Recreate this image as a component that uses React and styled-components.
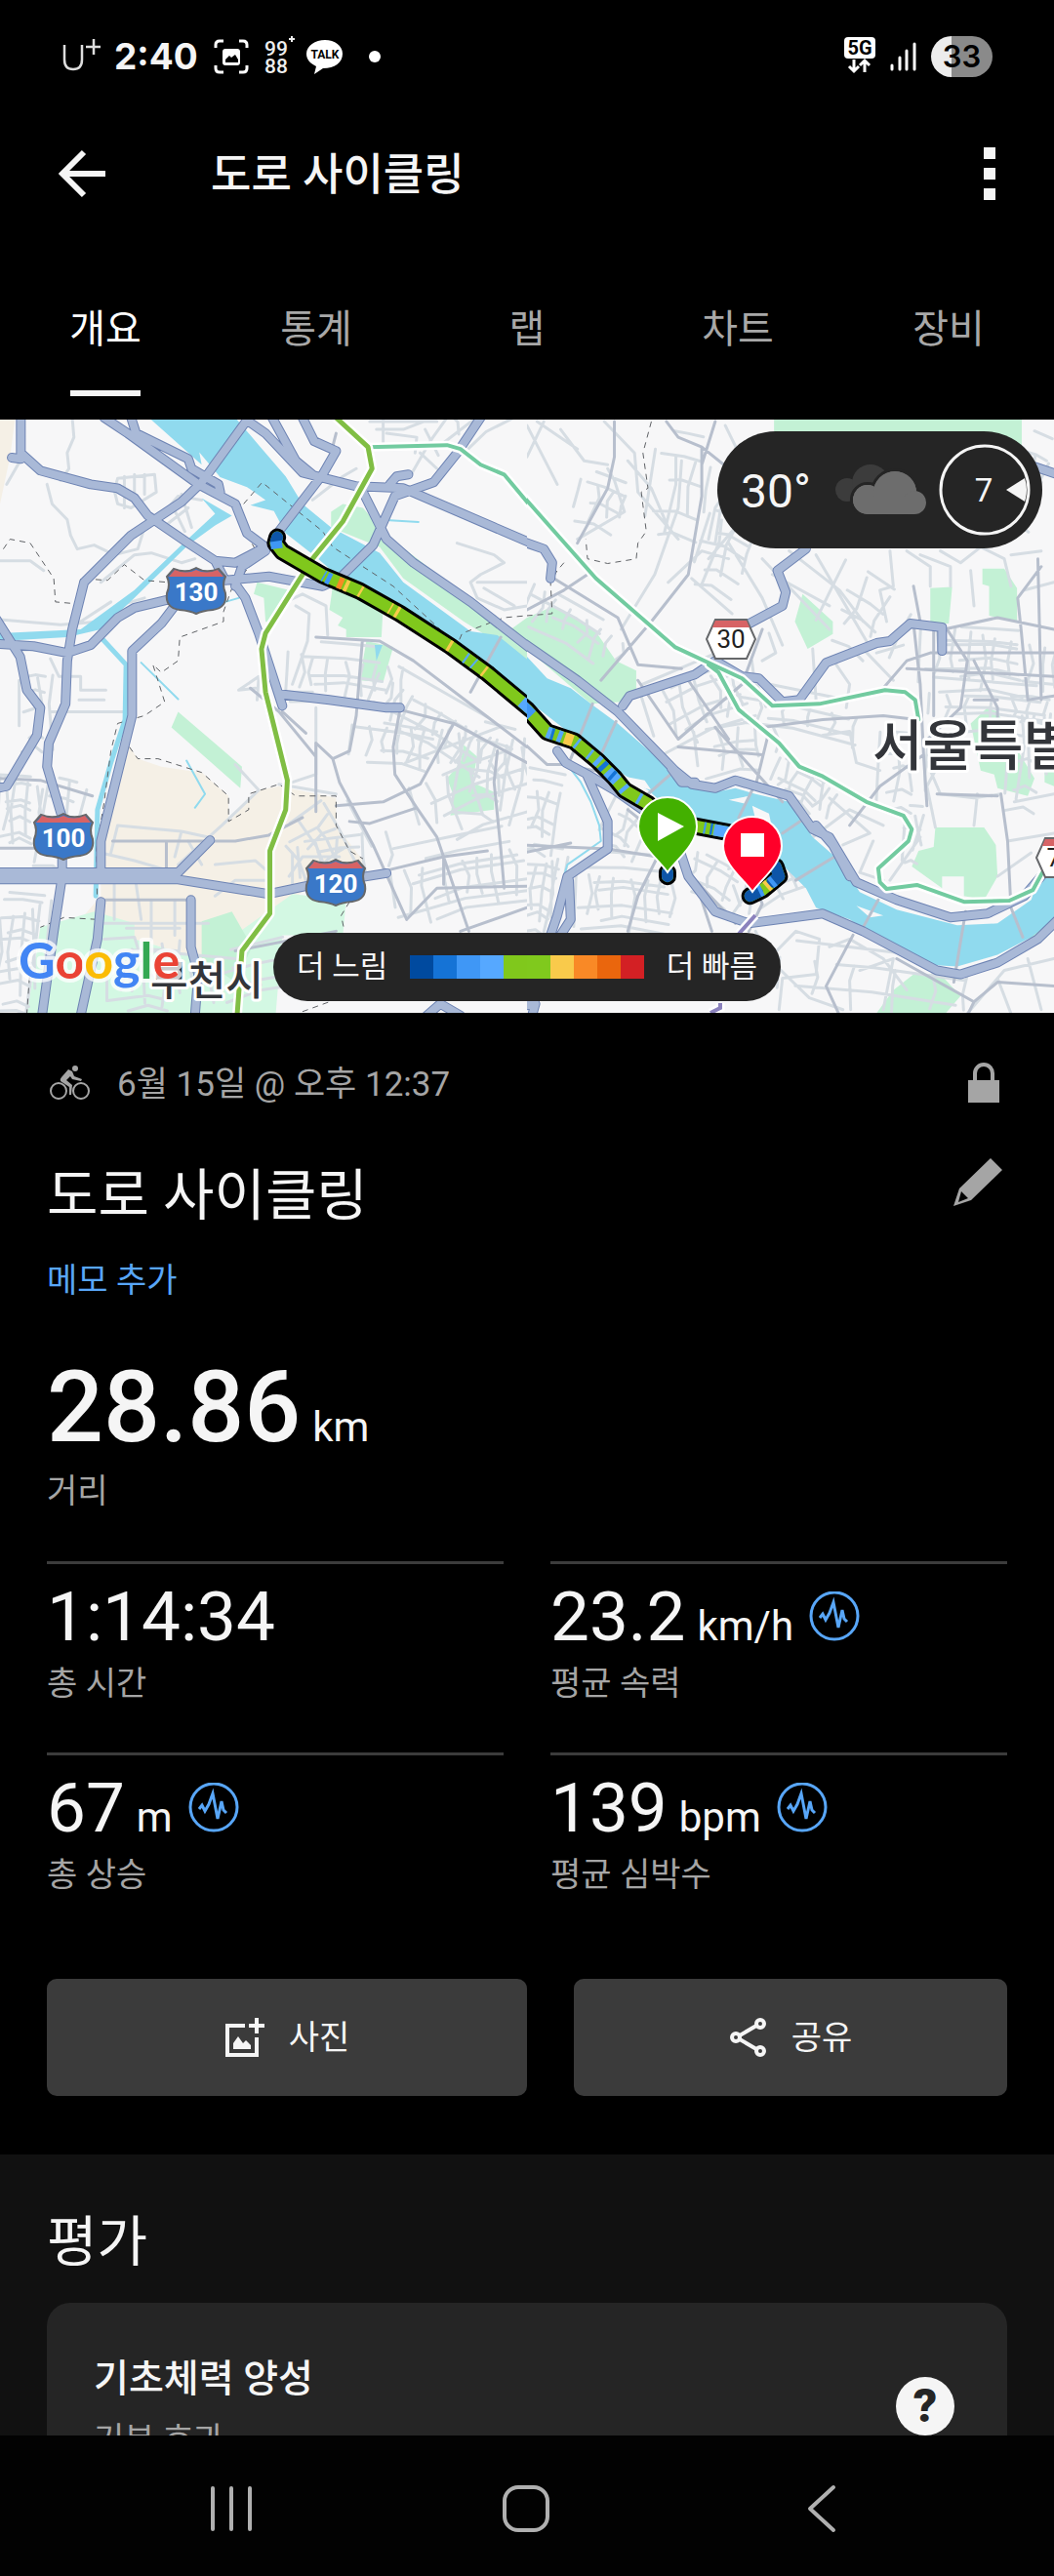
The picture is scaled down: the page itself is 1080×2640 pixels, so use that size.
import React, { useState } from 'react'
import styled, { createGlobalStyle } from 'styled-components'

const GlobalStyle = createGlobalStyle`
  * {
    box-sizing: border-box;
  }

  body {
    margin: 0;
    background: #000;
    color: #f5f5f5;
    font-family: Roboto, 'Noto Sans CJK KR', sans-serif;
  }

  button {
    padding: 0;
    border: none;
    background: none;
    color: inherit;
    font: inherit;
    cursor: pointer;
  }

  h1,
  h2,
  h3,
  p {
    margin: 0;
    font-weight: 400;
  }

  svg {
    display: block;
    flex: none;
  }
`

const Screen = styled.div`
  display: flex;
  flex-direction: column;
  height: 100vh;
`

const StatusBar = styled.div`
  display: flex;
  flex: none;
  align-items: center;
  justify-content: space-between;
  height: 116px;
  padding: 0 63px;
`

const StatusGroup = styled.div`
  display: flex;
  align-items: center;
  gap: 12px;
`

const Clock = styled.span`
  font-family: Inter, sans-serif;
  font-size: 37px;
  font-weight: 700;
  line-height: 48px;
`

const Battery = styled.span`
  width: 63px;
  height: 42px;
  border-radius: 21px;
  background: linear-gradient(90deg, #ececec 33%, #8a8a8a 33%);
  color: #000;
  font-family: Inter, sans-serif;
  font-size: 31px;
  font-weight: 600;
  line-height: 42px;
  text-align: center;
`

const AppBar = styled.header`
  display: flex;
  flex: none;
  align-items: center;
  height: 124px;
  padding: 0 60px;
`

const AppTitle = styled.h1`
  flex: 1;
  padding: 4px 0 0 108px;
  font-size: 45px;
  font-weight: 500;
  line-height: 60px;
`

const TabList = styled.div`
  display: flex;
  flex: none;
`

const Tab = styled.button`
  display: flex;
  flex: 1;
  flex-direction: column;
  align-items: center;
  gap: 32px;
  padding: 68px 0 24px;
  color: ${(props) => (props.$active ? '#fff' : '#a8a8a8')};
  font-size: 40px;
  line-height: 60px;

  &::after {
    content: '';
    width: 72px;
    height: 6px;
    background: ${(props) => (props.$active ? '#f5f5f5' : 'transparent')};
  }
`

const Content = styled.main`
  flex: 1;
  min-height: 0;
  overflow: hidden;
`

const MapArea = styled.section`
  position: relative;
`

const MapSvg = styled.svg`
  width: 100%;
  height: auto;
`

const Weather = styled.div`
  position: absolute;
  top: 12px;
  right: 12px;
  display: flex;
  align-items: center;
  gap: 12px;
  width: 333px;
  height: 120px;
  padding: 0 12px 0 24px;
  border-radius: 60px;
  background: #252525;
`

const Temperature = styled.span`
  flex: 1;
  padding-top: 4px;
  font-size: 48px;
  line-height: 60px;
`

const Legend = styled.div`
  position: absolute;
  bottom: 12px;
  left: 50%;
  display: flex;
  align-items: center;
  justify-content: space-between;
  width: 520px;
  height: 70px;
  padding: 0 24px;
  transform: translateX(-50%);
  border-radius: 35px;
  background: #252525;
  font-size: 31px;
  line-height: 48px;
`

const Scale = styled.div`
  display: flex;
`

const Swatch = styled.span`
  width: 24px;
  height: 24px;
  background: ${(props) => props.$color};
`

const Summary = styled.section`
  padding: 48px 48px 60px;
`

const MetaRow = styled.div`
  display: flex;
  align-items: center;
  gap: 24px;
  height: 48px;
  color: #a5a5a5;
  font-size: 35px;
  line-height: 48px;
`

const MetaDate = styled.p`
  flex: 1;
  padding-top: 4px;
`

const NameRow = styled.div`
  display: flex;
  align-items: flex-start;
  justify-content: space-between;
  margin-top: 48px;
`

const ActivityName = styled.h2`
  font-size: 57px;
  line-height: 88px;
`

const MemoLink = styled.a`
  display: block;
  margin-top: 20px;
  color: #58a6f8;
  font-size: 34px;
  line-height: 44px;
  text-decoration: none;
`

const Distance = styled.div`
  margin-top: 48px;
`

const ValueRow = styled.div`
  display: flex;
  align-items: baseline;
  gap: 12px;
`

const Value = styled.span`
  font-size: ${(props) => (props.$large ? 102 : 71)}px;
  font-weight: ${(props) => (props.$large ? 500 : 400)};
  line-height: ${(props) => (props.$large ? 120 : 84)}px;
`

const Unit = styled.span`
  font-size: 42px;
`

const Label = styled.p`
  margin-top: 4px;
  color: #a5a5a5;
  font-size: 34px;
  line-height: 44px;
`

const StatGrid = styled.div`
  display: grid;
  grid-template-columns: 1fr 1fr;
  column-gap: 48px;
  margin-top: 50px;
`

const StatCell = styled.div`
  height: 196px;
  padding-top: 12px;
  border-top: 3px solid #3c3c3c;
`

const InfoButton = styled.button`
  align-self: center;
  margin-left: 4px;
`

const Actions = styled.div`
  display: flex;
  gap: 48px;
  margin-top: 36px;
`

const ActionButton = styled.button`
  display: flex;
  flex: ${(props) => props.$grow};
  align-items: center;
  justify-content: center;
  gap: 24px;
  height: 120px;
  border-radius: 10px;
  background: #3b3b3b;
  font-size: 34px;
  line-height: 48px;
`

const Ratings = styled.section`
  padding: 50px 48px 48px;
  background: #111;
`

const SectionTitle = styled.h2`
  font-size: 56px;
  line-height: 80px;
`

const Card = styled.article`
  display: flex;
  align-items: flex-start;
  justify-content: space-between;
  margin-top: 22px;
  padding: 52px 54px 96px 48px;
  border-radius: 24px;
  background: #252525;
`

const CardTitle = styled.h3`
  font-size: 39px;
  font-weight: 500;
  line-height: 52px;
`

const CardSubtitle = styled.p`
  margin-top: 14px;
  color: #a5a5a5;
  font-size: 34px;
  line-height: 44px;
`

const HelpButton = styled.button`
  width: 60px;
  height: 60px;
  margin-top: 24px;
  border-radius: 50%;
  background: #f5f5f5;
  color: #252525;
  font-size: 48px;
  font-weight: 900;
  line-height: 60px;
`

const NavBar = styled.nav`
  display: flex;
  flex: none;
  height: 144px;
  padding: 6px 88px 0 86px;
  background: #020202;
`

const NavButton = styled.button`
  display: flex;
  flex: 1;
  align-items: center;
  justify-content: center;
`

/* ---------- map data ---------- */

const colors = {
  land: '#f7f7f8',
  water: '#90daee',
  park: '#c3f1d5',
  meadow: '#d3f8e3',
  city: '#f5f0e6',
  street: '#d6dde3',
  avenue: '#b7bfcd',
  highway: '#a9b9d7',
  highwayEdge: '#6d83b3',
}

// one street block: slightly irregular lines across a tilted rectangle
function streets(x, y, w, h, cols, rows, angle) {
  const rad = (angle * Math.PI) / 180
  const at = (u, v) => {
    const px = x + u * Math.cos(rad) - v * Math.sin(rad)
    const py = y + u * Math.sin(rad) + v * Math.cos(rad)
    return `${Math.round(px)} ${Math.round(py)}`
  }
  let d = ''
  for (let i = 0; i <= cols; i++) {
    const u = (w * i) / cols + Math.sin(i * 5 + x) * 9
    const top = Math.abs(Math.sin(i * 3 + y)) * h * 0.3
    const bottom = h - Math.abs(Math.cos(i * 7 + x)) * h * 0.3
    d += `M${at(u, top)}L${at(u + Math.sin(i * 2) * 14, h / 2)}L${at(u, bottom)}`
  }
  for (let j = 0; j <= rows; j++) {
    const v = (h * j) / rows + Math.sin(j * 4 + y) * 9
    const left = Math.abs(Math.sin(j * 5 + x)) * w * 0.3
    const right = w - Math.abs(Math.cos(j * 3 + y)) * w * 0.3
    d += `M${at(left, v)}L${at(w / 2, v + Math.sin(j * 6) * 14)}L${at(right, v)}`
  }
  return d
}

const west = {
  city: [
    'M385 860L410 890L480 910L600 925L680 985V1050L770 970L830 960L1000 990V1060L1080 1150L900 1230L600 1400L400 1350L240 1300L300 1240V1100Z',
    'M0 20H45L30 120L0 240Z',
  ],
  meadow: ['M120 1320L280 1280L400 1310V1350L600 1400L870 1235L1030 1250L1020 1340H840L820 1545H80Z'],
  park: [
    'M530 770L720 910L715 965L510 810Z',
    'M985 260L1020 240L1080 250L1150 320L1250 385L1568 600V640L1380 540L1200 430L1130 350L985 300Z',
    'M765 440L860 460L820 550L790 540L785 480L755 470Z',
    'M990 450L1140 500L1135 580L1030 580V560L1005 550L1020 530L980 510Z',
    'M1090 590L1170 605L1140 695L1070 690Z',
    'M1380 855L1420 885L1405 950L1470 975V1020L1340 1035L1350 985L1330 940L1370 900Z',
    'M1568 530L1520 560L1568 590Z',
    'M600 1305L690 1280L750 1370L700 1460L600 1400Z',
  ],
  water: [
    'M430 10L600 140L593 108L655 172L735 197L790 230L745 243L815 258L850 315L940 375L1020 435L1200 500L1350 590L1568 740V636L1480 575L1400 565L1200 440L1130 365L985 300L900 240L850 170L770 90L690 10Z',
    'M600 225L690 270L640 295L560 345L400 480L300 560L200 580L0 590V570L240 560L400 460L540 345L640 265Z',
    'M1115 600H1138L1120 640Z',
  ],
  canal: ['M305 585L375 650L372 790L330 900L290 1020L285 1240'],
  brook: ['M555 895L610 980L580 1015', 'M420 645L530 738', 'M630 500L710 480', 'M1160 282L1245 286'],
  streets: [
    'M215 20L220 70L200 110L205 150L180 180M140 190L155 240L200 280L210 320L230 355L280 345L340 370L410 355L430 300',
    'M340 205L350 175L460 165L465 210L390 250L350 240ZM370 170V250M400 165V240M430 165V215',
    'M20 190L60 130M0 385H90L130 410M300 440L400 370L450 365L540 390L580 380',
    'M480 270L530 220L600 230M500 290L560 250M540 215L570 300M510 240L550 310',
    'M0 535L180 548L300 540L350 500L430 480M240 540L330 490M150 635L175 680H240V715H315M235 740H310M150 770H370',
    'M850 490L900 470L970 500L975 575M880 500L920 520L915 590L870 700M1060 150L1020 170L930 230M1150 60L1240 70L1235 110M1120 50H1200L1260 30',
    'M1330 20L1280 80L1220 170M1140 20V100M1250 110L1300 150M1360 340L1470 370L1500 390L1430 420L1400 440L1420 480L1500 510L1568 500M1420 440H1568M1440 455L1530 500',
    'M850 720H930M940 760V930L870 950M760 710L710 715L770 680L765 740M1100 30H1300M440 1380L700 1400',
    'M300 1130L400 1150L520 1180M330 1130L350 1060L540 1075L620 1090M540 1075L520 1140M640 1160L760 1150L800 1180M860 1190L900 1140H1010M700 905L770 970L660 1060L530 1160M830 955L1000 980',
    'M300 1310H620M310 1350L400 1345L420 1400M450 1250V1350M520 1250V1340M400 1180L420 1300M340 1190V1300M560 1100L600 1160M640 1240L700 1200H800M870 1130V1230',
    streets(850, 590, 360, 150, 8, 4, 4),
    streets(1140, 640, 420, 150, 10, 3, 26),
    streets(1060, 780, 300, 110, 7, 3, 8),
    streets(1150, 1130, 420, 200, 8, 6, -10),
    streets(0, 930, 130, 180, 5, 6, 3),
    streets(-20, 1220, 180, 320, 6, 9, 4),
    streets(310, 1330, 260, 210, 6, 5, 0),
    streets(1200, 910, 360, 220, 6, 4, -18),
    streets(1000, 960, 200, 200, 4, 4, 58),
    streets(880, 1100, 260, 130, 4, 3, -6),
    streets(620, 1400, 260, 130, 4, 3, -12),
    streets(140, 930, 130, 240, 2, 4, 12),
    streets(1240, 20, 320, 140, 4, 3, -30),
    streets(60, 620, 90, 260, 2, 5, 0),
    streets(1400, 780, 170, 260, 4, 4, 12),
  ],
  avenues: [
    'M940 580L1130 590L1230 640L1568 860M840 770L910 825M830 770L940 885M940 850V1025M940 850L990 890L1010 950L1110 1110L1210 1300',
    'M990 890L1040 870L1060 780L1078 590M1190 765L1350 800L1568 900M1190 765L1170 860L1175 930L1240 1015L1300 1090L1395 1330',
    'M1350 800L1250 955L1140 1000L1000 1010M1480 870L1470 950L1490 1120L1500 1220M335 1100H700L800 1085L900 1040M1210 1300L1300 1220L1568 1215',
    'M300 1250H560M0 940L120 945L275 985M0 1118H100M830 770L745 710M1040 1050L1100 1055L1240 1015M1150 1175L1320 1140L1450 1125M1320 1140V1210M700 1380L1000 1330M1370 1330L1568 1270',
    'M1490 580L1400 720M1000 60L985 110M495 1105V1170',
  ],
  borders: [
    'M10 355L30 330L90 340L160 430L165 490L230 495L240 430L320 435L370 395L430 435L500 440',
    'M725 240L780 185L960 310L990 350L1170 450L1360 600L1375 570L1500 530L1568 525',
    'M715 240L720 300L770 370L690 455L665 515V540L535 580L530 640L480 670L455 650L490 745L430 780L350 800L330 870L310 1000L287 1120L290 1300L190 1295L120 1320',
    'M385 860L410 890L470 890L600 925L680 985V1050L740 1020V980L830 955L880 985H1000V1060L1040 1125L1080 1145',
    'M1040 1255L1015 1290L1025 1330M90 1420L80 1540M900 1535L980 1510',
  ],
  highways: [
    'M62 20V110L120 155L270 190L350 200L400 225L440 270L560 340L640 385L700 390L790 350L735 315L700 240L590 190L380 60L310 20',
    'M35 122L62 125',
    'M740 20L600 185L540 235L390 320L250 440L215 560L200 640L195 750L145 850L140 910L185 1040V1190L160 1330L125 1545',
    'M-10 597L100 603L200 620L270 600L350 530L400 505L520 480',
    'M640 385L670 435L800 425L960 450L1010 430L1110 345L1175 220L1290 185L1360 110L1430 20',
    'M700 450L720 400L790 360',
    'M520 500L480 545L393 615V780L300 1100V1190',
    'M-10 1180H530L625 1098',
    'M-10 1198H530L800 1235L910 1215L1150 1182',
    'M740 30L790 60L900 160L1060 195L1200 200L1580 340',
    'M1160 190L1180 170L1215 165',
    'M830 310L960 165L1000 105L935 80L900 20',
    'M810 20L880 130L930 165',
    'M1080 210L1150 330L1230 390L1400 490L1580 610',
    'M705 450L730 480L770 570L840 755M830 725L980 740L1150 760H1190',
    'M390 20L405 60L560 125L570 150L650 190L655 210',
    'M-10 535L60 630L80 715L120 760L110 830L20 960L-10 965',
    'M300 1255L290 1350L240 1545M568 1250V1370L590 1440L580 1545M1270 1545L1310 1515L1370 1545',
  ],
  lime: 'M1000 20L1095 95L1107 150L1020 285L930 380L790 570L778 610L790 720L855 945L850 1020L803 1125V1285L720 1380L705 1550',
  teal: ['M1095 95L1330 90L1370 100L1430 140L1500 165L1580 247'],
  route: ['M825 325L820 340L840 362L960 422L1070 462L1190 520L1340 603L1450 672L1580 765'],
  pace: [
    ['#0d55a8', 'M825 325L821 335', 'round'],
    ['#3f97f6', 'M821 335L824 354'],
    ['#3f97f6', 'M962 423L966 425M972 428L984 433'],
    ['#f98926', 'M1006 440L1020 445'],
    ['#f9ca4b', 'M1026 447L1036 451M1070 462L1076 465M1160 506L1164 508M1178 514L1186 518M1334 600L1342 604M1438 665L1444 669'],
    ['#56a8ff', 'M1384 632L1389 635M1408 646L1412 649M1552 744L1580 765'],
  ],
}

const east = {
  city: [],
  meadow: [],
  park: [
    'M0 530L80 500L200 560L265 640L325 665V715L285 745L190 750L0 610Z',
    'M735 20H1472V110H735Z',
    'M820 470L910 540V572L835 610L797 540Z',
    'M1200 455L1265 452L1255 545H1200Z',
    'M1355 405H1420L1458 455V540L1375 525V450L1355 445Z',
    'M1215 1065H1360L1395 1110L1400 1190L1360 1250L1300 1240V1190H1235V1220L1145 1165L1165 1125L1210 1115Z',
    'M1370 760L1400 770L1440 840L1510 940L1490 985L1400 965L1390 930L1350 920L1320 800Z',
    'M1150 1440L1230 1440L1290 1495L1240 1545H1035L1090 1480Z',
    'M1470 1345L1568 1290V1310L1520 1350Z',
    'M1540 900L1568 890V960L1540 950Z',
  ],
  water: [
    'M0 630L60 685L130 710L190 750L270 800L430 920L500 960L560 975L620 965L680 980L780 1000L850 1090L930 1150L990 1230L1100 1275L1280 1315L1400 1310L1500 1250L1530 1180L1568 1130V1300L1500 1345L1400 1390L1280 1420L1180 1415L1050 1350L960 1300L860 1270L830 1220L770 1170L720 1140L600 1070L510 1050L400 1000L360 970L270 920L150 840L0 740Z',
  ],
  canal: [],
  brook: ['M120 905L160 950L190 1000L215 1060L220 1100L120 1160L100 1220'],
  islands: 'M600 995L660 985L650 1005ZM670 1010L720 1030L740 1110L690 1080ZM980 1265L1060 1290L1020 1295ZM290 935L350 945L370 970L330 960Z',
  streets: [
    'M50 30L0 120M100 50L170 130L240 140M230 30L320 110L330 210L450 330M300 130L370 200L420 300M150 330L290 260L260 180L240 150',
    'M460 130L450 250L380 420L280 560M590 40L630 110L600 200L560 250L540 330M600 120L560 340M540 380L620 300M600 340L700 480L760 600M700 380L900 560',
    'M0 40L90 190M150 100L30 30M490 430L610 520M420 440L520 360L600 380M730 420L900 500M780 360L930 460L1000 540M860 370L1010 590',
    'M1080 360L1090 450L1050 460L1070 540M1130 360L1200 400V450M1170 370L1260 400V450M1320 410L1330 500M1230 360L1290 390L1350 350L1420 380L1440 450M1440 370L1530 360M1480 460L1568 440',
    'M720 570L740 620L700 640M620 600L660 540M850 610L860 740M920 650L960 700L950 760M1000 610L1090 690M1040 620L1120 600',
    'M850 1090L960 1020L1060 1060M1180 880L1230 980L1330 990L1410 980M900 990L1020 1080L940 1110M880 830L960 820L980 900L1050 920M1030 1100L990 1180L1060 1200',
    'M1170 1090L1080 1200M1215 1065L1190 960L1240 880M1330 1060L1340 980M1430 1100L1568 1080M1400 1190L1500 1130M1450 1000L1568 980',
    'M680 1330L720 1400L800 1330L870 1350L860 1440L760 1450L750 1530M900 1370L960 1350L1060 1400L1130 1480M720 1400L840 1500L940 1530M990 1430L1090 1400L1060 1530M1310 1540L1420 1430L1568 1400M1400 1450L1440 1540M1490 1400L1530 1530',
    streets(600, 1180, 240, 130, 4, 3, -22),
    streets(180, 140, 130, 140, 3, 3, 18),
    streets(20, 430, 320, 110, 7, 3, 26),
    streets(560, 200, 150, 250, 3, 5, 20),
    streets(330, 700, 330, 200, 6, 5, -20),
    streets(500, 820, 240, 120, 4, 3, -8),
    streets(620, 690, 380, 110, 5, 3, 10),
    streets(760, 880, 200, 100, 6, 4, 28),
    streets(1180, 550, 400, 160, 9, 6, 3),
    streets(1200, 690, 360, 120, 6, 4, 4),
    streets(1060, 820, 130, 200, 3, 4, 4),
    streets(-10, 900, 130, 220, 3, 5, 10),
    streets(-20, 1110, 150, 220, 6, 6, 8),
    streets(140, 1130, 300, 200, 7, 6, 3),
    streets(260, 980, 140, 130, 3, 3, 30),
    streets(470, 1100, 260, 110, 5, 3, 25),
    streets(760, 1340, 560, 190, 5, 3, 6),
    streets(1120, 1000, 70, 150, 2, 2, 5),
    streets(1490, 40, 100, 260, 2, 4, 20),
    streets(1440, 680, 130, 340, 3, 6, 5),
    streets(960, 380, 220, 200, 3, 3, 30),
    streets(400, 40, 160, 280, 3, 4, 10),
  ],
  avenues: [
    'M260 30V120L240 200L150 340M415 30L450 70L520 95L600 150M520 95V220L480 420L370 540L220 690M560 30L520 140',
    'M0 510L110 460L180 420M80 430L270 530L330 650L460 660M480 690L600 840M330 690L450 840M450 840L640 700L700 560M720 820L680 960M700 810L880 790L1060 780L1160 790',
    'M1150 545L1170 700L1180 880L1190 1010M1060 710L1130 640L1200 620H1568M1150 450L1170 540L1240 560L1400 530L1568 560M1180 880L1050 960L960 1060M1180 850L1290 760L1310 640L1250 560M1210 560V780M1330 640L1400 760V830',
    'M1410 980L1430 1100L1440 1270M1530 400L1460 480L1470 560L1490 740L1568 730M1520 380L1525 560L1530 740M1330 740H1400M1130 660L1568 680',
    'M-10 850L60 905H110L230 925M-10 1110L240 1120M300 1020L460 1130M-10 1130L130 1105M240 1120L460 1150M500 1200L550 1330M970 1340L890 1470L930 1545M1100 1400L1330 1510L1400 1460L1568 1470M1330 1510L1310 1545M400 1120L330 1240L300 1330M620 1310L480 1180M660 1330L700 1260L640 1140',
    'M195 750L130 890M265 795L220 880M440 920L360 980M670 970L630 1040M830 1040L760 1080M915 1140L800 1200M1045 1250L1000 1320M1305 1280L1270 1460M1440 1270L1475 1345M1220 980L1400 985M450 860L700 880M560 810L760 1000',
  ],
  borders: [
    'M370 30L345 110L360 200L340 210L355 310L330 340L325 380L240 392L180 380L175 330',
    'M110 390L90 410L70 440L75 520L0 525',
  ],
  highways: [
    'M-10 595L150 690L270 770L440 920L490 955L560 965L620 945L700 965L780 985L850 1070L900 1090L980 1205L1100 1250L1260 1295L1370 1285L1480 1240L1540 1180',
    'M430 915L460 950L500 950M860 1060L910 1110L960 1190',
    'M285 755L305 730L500 675L560 640L640 680L690 685L760 745L810 740L890 645L1040 595L1080 590L1140 545L1235 555V615',
    'M640 555L760 500L770 465L745 410L830 355',
    'M-10 337L50 355L75 390L70 430',
    'M1510 145L1580 165',
    'M90 870L115 900L180 930L260 970L360 1030',
    'M180 935L240 1050V1120L120 1190L90 1290L70 1340M125 1200L130 1300L100 1340',
    'M430 1060L480 1190L560 1280L660 1310L880 1285L1000 1330L1220 1430L1290 1440L1400 1410L1520 1350L1580 1300',
    'M-10 1520L25 1515L15 1545',
  ],
  lime: '',
  teal: [
    'M-10 222L205 430L440 605L640 685L730 755L870 750L1065 715L1125 720L1155 740L1165 790',
    'M540 650L570 670L630 765L750 850L810 910L880 935L1010 1000L1120 1035L1145 1070L1135 1100L1045 1170L1050 1205L1070 1222L1160 1212L1300 1255L1435 1252L1505 1225L1540 1170',
  ],
  route: [
    'M-12 756L0 765L60 822L140 845L210 895L260 938L290 970L360 1005L418 1060',
    'M500 1062L600 1078',
    'M740 1165L750 1190L700 1225L664 1240',
    'M418 1180V1190',
  ],
  pace: [
    ['#3f97f6', 'M-12 756L14 779'],
    ['#f9ca4b', 'M112 837L136 844'],
    ['#56a8ff', 'M60 822L72 826M92 831L104 835M146 849L152 853M184 877L190 881M206 892L216 900M240 921L268 946M284 963L292 971M330 990L338 994M556 1071L600 1078'],
    ['#1573d6', 'M72 826L80 828M222 905L232 914M250 930L258 936M545 1069L552 1070'],
    ['#0d55a8', 'M740 1165L750 1190L730 1204M685 1231L664 1240M418 1180V1190', 'round'],
    ['#3f97f6', 'M526 1066L532 1067M735 1201L725 1208M700 1225L690 1229'],
    ['#f9ca4b', 'M720 1211L712 1217'],
  ],
}

const Shape = styled.path`
  fill: ${(props) => props.$fill};
`

const Line = styled.path`
  fill: none;
  stroke: ${(props) => props.$color};
  stroke-width: ${(props) => props.$width}px;
  stroke-linecap: ${(props) => props.$cap || 'round'};
  stroke-linejoin: round;
  stroke-dasharray: ${(props) => props.$dash || 'none'};
  vector-effect: non-scaling-stroke;
`

const MapLabel = styled.text`
  fill: #33353a;
  stroke: #fff;
  stroke-width: 6px;
  stroke-linejoin: round;
  paint-order: stroke;
  font-family: 'Noto Sans CJK KR', sans-serif;
  font-size: ${(props) => props.$size}px;
  font-weight: 500;
`

const Logo = styled.text`
  stroke: rgba(255, 255, 255, 0.75);
  stroke-width: 8px;
  stroke-linejoin: round;
  paint-order: stroke;
  font-family: Lato, sans-serif;
  font-size: 52px;
  font-weight: 700;
`

function MapTile({ data, x }) {
  return (
    <svg x={x} y="0" width="540" height="630" viewBox="0 0 1568 1568" preserveAspectRatio="none">
      <Shape $fill={colors.city} d={data.city.join('')} />
      <Shape $fill={colors.meadow} d={data.meadow.join('')} />
      <Shape $fill={colors.park} d={data.park.join('')} />
      <Line $color={colors.street} $width={3} d={data.streets.join('')} />
      <Shape $fill={colors.water} d={data.water.join('')} />
      {data.islands && <Shape $fill={colors.land} d={data.islands} />}
      <Line $color={colors.water} $width={5} d={data.canal.join('')} />
      <Line $color={colors.water} $width={2} d={data.brook.join('')} />
      <Line $color={colors.avenue} $width={3} d={data.avenues.join('')} />
      <Line $color="#5f6266" $width={1} $dash="6 5" $cap="butt" d={data.borders.join('')} />
      <Line $color={colors.highwayEdge} $width={10} d={data.highways.join('')} />
      <Line $color={colors.highway} $width={8} d={data.highways.join('')} />
      <Line $color="#fff" $width={9} d={data.teal.join('')} />
      <Line $color="#72cba0" $width={4} d={data.teal.join('')} />
      <Line $color="#fff" $width={10} d={data.lime} />
      <Line $color="#80be44" $width={5} d={data.lime} />
      <Line $color="#000" $width={18} d={data.route.join('')} />
      <Line $color="#80c81c" $width={12} d={data.route.join('')} />
      {data.pace.map(([color, d, cap]) => (
        <Line key={d} $color={color} $width={12} $cap={cap || 'butt'} d={d} />
      ))}
    </svg>
  )
}

function InterstateShield({ x, y, number }) {
  return (
    <g transform={`translate(${x} ${y})`}>
      <path
        d="M-23 -22Q-10 -17 0 -23Q10 -17 23 -22L30 -14Q26 -6 30 3Q32 18 17 20Q6 21 0 24Q-6 21 -17 20Q-32 18 -30 3Q-26 -6 -30 -14Z"
        fill="#3a78c8"
        stroke="#66686b"
        strokeWidth="2"
      />
      <path d="M-22 -21Q-10 -16 0 -21Q10 -16 22 -21L28 -14H-28Z" fill="#d76365" />
      <text y="11" fill="#fff" fontSize="26" fontWeight="700" textAnchor="middle">
        {number}
      </text>
    </g>
  )
}

function CityShield({ x, y, number }) {
  return (
    <g transform={`translate(${x} ${y})`}>
      <path d="M-16 -20H16L25 0L16 20H-16L-25 0Z" fill="#fff" stroke="#66686b" strokeWidth="2" />
      <path d="M-16 -19H16L19 -12H-19Z" fill="#d76365" />
      <text y="9" fill="#222" fontSize="26" textAnchor="middle">
        {number}
      </text>
    </g>
  )
}

function Pin({ x, y, color, children }) {
  return (
    <g transform={`translate(${x} ${y})`}>
      <path
        d="M0 0C-8 -12 -30 -28 -30 -47A30 30 0 0 1 30 -47C30 -28 8 -12 0 0Z"
        fill={color}
        stroke="#fff"
        strokeWidth="2"
      />
      {children}
    </g>
  )
}

function RideMap() {
  return (
    <MapSvg viewBox="0 10 1080 608" role="img" aria-label="경로 지도">
      <rect y="10" width="1080" height="608" fill={colors.land} />
      <MapTile data={west} x="0" />
      <MapTile data={east} x="540" />
      <path d="M774 518L757 537M738 608V613L728 618" stroke="#fff" strokeWidth="9" fill="none" />
      <path d="M774 518L757 537M738 608V613L728 618" stroke="#8b82bd" strokeWidth="4" fill="none" />
      <InterstateShield x="201" y="185" number="130" />
      <InterstateShield x="65" y="437" number="100" />
      <InterstateShield x="344" y="484" number="120" />
      <CityShield x="749" y="235" number="30" />
      <CityShield x="1087" y="459" number="70" />
      <MapLabel $size={42} x="154" y="600">부천시</MapLabel>
      <MapLabel $size={56} x="894" y="364">서울특별시</MapLabel>
      <Logo x="19" y="583">
        <tspan fill="#4285f4">G</tspan>
        <tspan fill="#ea4335">o</tspan>
        <tspan fill="#fbbc05">o</tspan>
        <tspan fill="#4285f4">g</tspan>
        <tspan fill="#34a853">l</tspan>
        <tspan fill="#ea4335">e</tspan>
      </Logo>
      <Pin x="684" y="474" color="#43b000">
        <path d="M-10 -61L17 -47L-10 -32Z" fill="#fff" />
      </Pin>
      <Pin x="771" y="494" color="#ff0029">
        <rect x="-12" y="-60" width="24" height="24" fill="#fff" />
      </Pin>
    </MapSvg>
  )
}

/* ---------- icons ---------- */

function CarrierLogo() {
  return (
    <svg width="42" height="42" viewBox="0 0 42 42" fill="none" stroke="#ddd">
      <path d="M3 9V24Q3 34 12 34Q21 34 21 24V9" strokeWidth="2.500" />
      <path d="M25 11H40M33 3V19" strokeWidth="2.500" />
    </svg>
  )
}

function ScanIcon() {
  return (
    <svg width="44" height="42" viewBox="-4 0 44 42">
      <path
        d="M10 5H6Q2 5 2 9V12M26 5H30Q34 5 34 9V12M10 37H6Q2 37 2 33V30M26 37H30Q34 37 34 33V30"
        fill="none"
        stroke="#fff"
        strokeWidth="3"
      />
      <rect x="9" y="13" width="18" height="17" rx="3" fill="#fff" />
      <path d="M12 27V24L16 20L18 22L22 19L25 24V27Z" fill="#000" />
    </svg>
  )
}

function CountIcon() {
  return (
    <svg width="31" height="48" viewBox="0 0 31 48" fill="#eee" fontFamily="Roboto" fontSize="21" fontWeight="500">
      <text x="0" y="23">99</text>
      <text x="0" y="41">88</text>
      <path d="M27 3H29V5H31V7H29V9H27V7H25V5H27Z" />
    </svg>
  )
}

function TalkIcon() {
  return (
    <svg width="38" height="42" viewBox="0 0 38 42">
      <path d="M19 4C29 4 37 10 37 18C37 27 29 33 17 33L8 39L10 31C4 28 0 24 0 18C0 10 9 4 19 4Z" fill="#fff" />
      <text x="19" y="23" fontFamily="Roboto" fontSize="12" fontWeight="700" textAnchor="middle">
        TALK
      </text>
    </svg>
  )
}

function NetworkIcon() {
  return (
    <svg width="34" height="42" viewBox="0 0 34 42">
      <rect x="1" y="1" width="32" height="22" rx="4" fill="#fff" />
      <text x="17" y="19" fontFamily="Roboto" fontSize="20" fontWeight="700" textAnchor="middle">
        5G
      </text>
      <path d="M11 24V36M6 31L11 36L16 31M22 37V25M17 30L22 25L27 30" fill="none" stroke="#fff" strokeWidth="3" />
    </svg>
  )
}

function SignalIcon() {
  return (
    <svg width="32" height="42" viewBox="0 0 32 42" stroke="#fff" strokeWidth="3" strokeLinecap="round">
      <path d="M4 30V34M12 22V34M19 15V34M27 8V34" />
    </svg>
  )
}

function CloudIcon() {
  return (
    <svg width="94" height="54" viewBox="0 0 94 54">
      <g fill="#3c3c3c">
        <circle cx="12" cy="27" r="12" />
        <circle cx="36" cy="20" r="19" />
      </g>
      <g fill="#6d6d6d" stroke="#252525" strokeWidth="6" paintOrder="stroke">
        <circle cx="33" cy="37" r="15" />
        <circle cx="61" cy="30" r="22" />
      </g>
      <g fill="#6d6d6d">
        <circle cx="33" cy="37" r="15" />
        <circle cx="61" cy="30" r="22" />
        <circle cx="81" cy="40" r="12" />
        <rect x="33" y="34" width="48" height="18" />
      </g>
    </svg>
  )
}

function WindDial() {
  return (
    <svg width="94" height="94" viewBox="0 0 94 94">
      <circle cx="47" cy="47" r="45" fill="none" stroke="#f5f5f5" strokeWidth="3" />
      <path d="M69 47L88 35Q92 47 88 59Z" fill="#f5f5f5" />
      <text x="46" y="59" fill="#f5f5f5" fontSize="33" textAnchor="middle">
        7
      </text>
    </svg>
  )
}

function BikeIcon() {
  return (
    <svg width="48" height="40" viewBox="0 0 48 40">
      <g fill="none" stroke="#a5a5a5" strokeWidth="2">
        <circle cx="12" cy="28" r="8" />
        <circle cx="35" cy="28" r="8" />
      </g>
      <circle cx="29" cy="5" r="3" fill="#a5a5a5" />
      <path
        d="M22 6L26 8L28 13L36 16L35 18L26 16L24 13L20 17L26 22L25 32H23V24L14 18Q13 16 15 14Z"
        fill="#a5a5a5"
      />
    </svg>
  )
}

function LockIcon() {
  return (
    <svg width="48" height="42" viewBox="0 0 48 42">
      <path d="M15 20V11A9 9 0 0 1 33 11V20" fill="none" stroke="#a5a5a5" strokeWidth="4" />
      <rect x="8" y="18" width="32" height="23" fill="#a5a5a5" />
    </svg>
  )
}

function PencilIcon() {
  return (
    <svg width="56" height="60" viewBox="0 0 56 60">
      <path d="M39 5L51 17L19 48L1 54L7 36ZM9 39L6 50L16 46Z" fill="#a5a5a5" fillRule="evenodd" />
    </svg>
  )
}

function PulseIcon() {
  return (
    <svg width="52" height="52" viewBox="0 0 52 52" fill="none" stroke="#58a6f8">
      <circle cx="26" cy="25" r="24" strokeWidth="3" />
      <path d="M11 27L14 23L17 29L21 22L25 11L30 37L34 19L36 28L39 31" strokeWidth="3" />
    </svg>
  )
}

function PhotoIcon() {
  return (
    <svg width="42" height="42" viewBox="0 0 42 42">
      <path d="M21 9H3V39H33V21" fill="none" stroke="#f5f5f5" strokeWidth="4" />
      <path d="M25 9H41M33 1V17" stroke="#f5f5f5" strokeWidth="4" />
      <path d="M9 33V27L14 20L19 27L22 24L27 29V33Z" fill="#f5f5f5" />
    </svg>
  )
}

function ShareIcon() {
  return (
    <svg width="40" height="42" viewBox="0 0 40 42" fill="none" stroke="#f5f5f5" strokeWidth="4">
      <circle cx="7" cy="21" r="4" />
      <circle cx="32" cy="7" r="4" />
      <circle cx="32" cy="35" r="4" />
      <path d="M11 19L28 9M11 23L28 33" />
    </svg>
  )
}

/* ---------- screen ---------- */

const tabs = ['개요', '통계', '랩', '차트', '장비']

const paceScale = [
  '#004a9f',
  '#1573d6',
  '#3f97f6',
  '#56a8ff',
  '#80c81c',
  '#80c91d',
  '#f9ca4b',
  '#f98926',
  '#ea660d',
  '#d32024',
]

const stats = [
  { value: '1:14:34', label: '총 시간' },
  { value: '23.2', unit: 'km/h', label: '평균 속력', chart: true },
  { value: '67', unit: 'm', label: '총 상승', chart: true },
  { value: '139', unit: 'bpm', label: '평균 심박수', chart: true },
]

function App() {
  const [activeTab, setActiveTab] = useState('개요')

  return (
    <Screen>
      <GlobalStyle />
      <StatusBar>
        <StatusGroup>
          <CarrierLogo />
          <Clock>2:40</Clock>
          <ScanIcon />
          <CountIcon />
          <TalkIcon />
          <svg width="26" height="12" viewBox="0 0 26 12">
            <circle cx="20" cy="6" r="6" fill="#fff" />
          </svg>
        </StatusGroup>
        <StatusGroup>
          <NetworkIcon />
          <SignalIcon />
          <Battery>33</Battery>
        </StatusGroup>
      </StatusBar>

      <AppBar>
        <button aria-label="뒤로">
          <svg width="48" height="50" viewBox="0 0 48 50" fill="none" stroke="#f5f5f5" strokeWidth="6">
            <path d="M26 3L4 25L26 47M4 25H48" />
          </svg>
        </button>
        <AppTitle>도로 사이클링</AppTitle>
        <button aria-label="메뉴">
          <svg width="12" height="54" viewBox="0 0 12 54" fill="#f5f5f5">
            <path d="M0 0H12V12H0ZM0 21H12V33H0ZM0 42H12V54H0Z" />
          </svg>
        </button>
      </AppBar>

      <TabList role="tablist">
        {tabs.map((tab) => (
          <Tab
            key={tab}
            role="tab"
            aria-selected={tab === activeTab}
            $active={tab === activeTab}
            onClick={() => setActiveTab(tab)}
          >
            {tab}
          </Tab>
        ))}
      </TabList>

      <Content>
        <MapArea>
          <RideMap />
          <Weather>
            <Temperature>30°</Temperature>
            <CloudIcon />
            <WindDial />
          </Weather>
          <Legend>
            <span>더 느림</span>
            <Scale>
              {paceScale.map((color) => (
                <Swatch key={color} $color={color} />
              ))}
            </Scale>
            <span>더 빠름</span>
          </Legend>
        </MapArea>

        <Summary>
          <MetaRow>
            <BikeIcon />
            <MetaDate>6월 15일 @ 오후 12:37</MetaDate>
            <LockIcon />
          </MetaRow>
          <NameRow>
            <ActivityName>도로 사이클링</ActivityName>
            <button aria-label="이름 편집">
              <PencilIcon />
            </button>
          </NameRow>
          <MemoLink href="#memo">메모 추가</MemoLink>
          <Distance>
            <ValueRow>
              <Value $large>28.86</Value>
              <Unit>km</Unit>
            </ValueRow>
            <Label>거리</Label>
          </Distance>
          <StatGrid>
            {stats.map((stat) => (
              <StatCell key={stat.label}>
                <ValueRow>
                  <Value>{stat.value}</Value>
                  {stat.unit && <Unit>{stat.unit}</Unit>}
                  {stat.chart && (
                    <InfoButton aria-label={`${stat.label} 차트`}>
                      <PulseIcon />
                    </InfoButton>
                  )}
                </ValueRow>
                <Label>{stat.label}</Label>
              </StatCell>
            ))}
          </StatGrid>
          <Actions>
            <ActionButton $grow={41}>
              <PhotoIcon />
              사진
            </ActionButton>
            <ActionButton $grow={37}>
              <ShareIcon />
              공유
            </ActionButton>
          </Actions>
        </Summary>

        <Ratings>
          <SectionTitle>평가</SectionTitle>
          <Card>
            <div>
              <CardTitle>기초체력 양성</CardTitle>
              <CardSubtitle>기본 효과</CardSubtitle>
            </div>
            <HelpButton aria-label="도움말">?</HelpButton>
          </Card>
        </Ratings>
      </Content>

      <NavBar>
        <NavButton aria-label="최근 앱">
          <svg width="44" height="50" viewBox="0 0 44 50" stroke="#b0b0b0" strokeWidth="4" strokeLinecap="round">
            <path d="M3 4V46M22 4V46M41 4V46" />
          </svg>
        </NavButton>
        <NavButton aria-label="홈">
          <svg width="50" height="50" viewBox="0 0 50 50" fill="none" stroke="#b0b0b0" strokeWidth="4">
            <rect x="3" y="3" width="44" height="44" rx="14" />
          </svg>
        </NavButton>
        <NavButton aria-label="뒤로 가기">
          <svg width="32" height="50" viewBox="0 0 32 50" fill="none" stroke="#b0b0b0" strokeWidth="4">
            <path d="M29 3L5 25L29 47" strokeLinecap="round" strokeLinejoin="round" />
          </svg>
        </NavButton>
      </NavBar>
    </Screen>
  )
}

export default App
